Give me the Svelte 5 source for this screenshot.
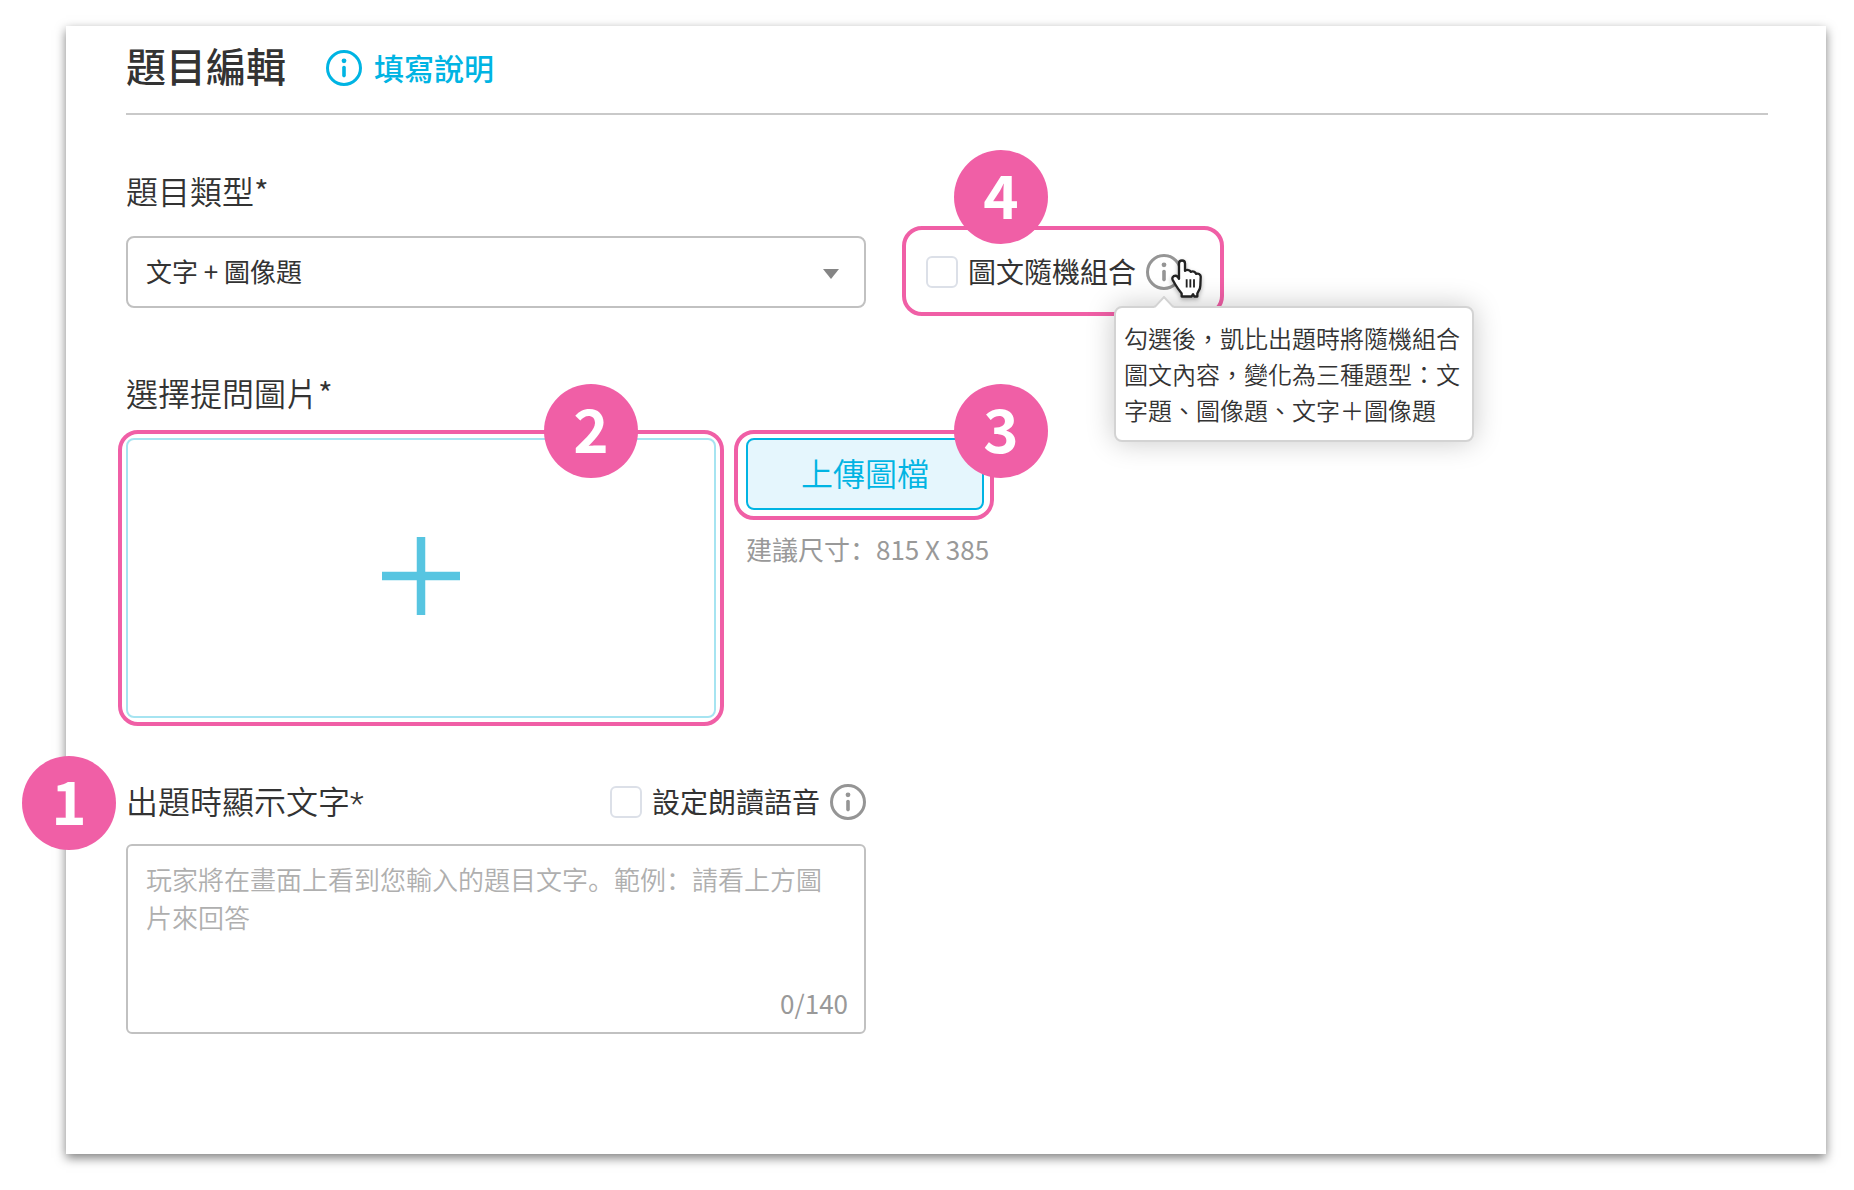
<script>
  let kind = $state('mixed');
  let shuffle = $state(false);
  let speech = $state(false);
  let prompt = $state('');
</script>

{#snippet info()}
  <svg class="info" viewBox="0 0 36 36" aria-hidden="true">
    <circle cx="18" cy="18" r="16.5" fill="none" stroke="currentColor" stroke-width="3" />
    <circle cx="18" cy="10.8" r="2.4" fill="currentColor" />
    <path d="M18 17.6v8" stroke="currentColor" stroke-width="3.6" stroke-linecap="round" />
  </svg>
{/snippet}

<main class="panel">
  <header>
    <h1>題目編輯</h1>
    <a href="#guide">{@render info()}<span>填寫說明</span></a>
  </header>

  <section class="row kind">
    <div class="field">
      <label class="title" for="kind">題目類型*</label>
      <div class="select">
        <select id="kind" bind:value={kind}>
          <option value="mixed">文字 + 圖像題</option>
          <option value="text">文字題</option>
          <option value="image">圖像題</option>
        </select>
        <svg viewBox="0 0 16 10" aria-hidden="true"><path d="M0 0h16l-8 10z" fill="#858585" /></svg>
      </div>
    </div>
    <div class="option marked">
      <label class="check"><input type="checkbox" bind:checked={shuffle} /><span>圖文隨機組合</span></label>
      <button class="hint-button" type="button" aria-label="說明" aria-describedby="tip">{@render info()}</button>
      <span class="badge">4</span>
      <div class="tooltip" id="tip" role="tooltip">
        <svg class="notch" viewBox="0 0 20 12" aria-hidden="true">
          <path d="M0 12L10 1l10 11z" fill="#fff" />
          <path d="M0 10.6h1.2L10 1l8.800 9.600h1.200" fill="none" stroke="#d3d3d3" stroke-width="2" />
        </svg>
        勾選後，凱比出題時將隨機組合圖文內容，變化為三種題型：文字題、圖像題、文字＋圖像題
      </div>
      <svg class="cursor" viewBox="0 0 96 116" aria-hidden="true">
        <path
          d="M24 52V13q0-9 9-9t9 9v22q5-4 10-2 5 1 7 5 6-3 11 0 4 2 5 6 6-2 10 1 5 3 4 10l-1 24q0 9-5 16l-4 8v9H70l-4-7-4 7H32v-9Q20 88 13 76L5 62q-3-7 3-11 7-3 12 2l4 6z"
          fill="#fff" stroke="#222" stroke-width="7" stroke-linejoin="round" />
        <path d="M47 60v25M58 60v25M69 60v25" stroke="#222" stroke-width="5.500" />
      </svg>
    </div>
  </section>

  <section>
    <h2 class="title">選擇提問圖片*</h2>
    <div class="row media">
      <div class="drop marked">
        <button type="button" aria-label="選擇圖片">
          <svg viewBox="0 0 78 78" aria-hidden="true"><path d="M39 0v78M0 39h78" stroke="#57c5e1" stroke-width="8.500" /></svg>
        </button>
        <span class="badge">2</span>
      </div>
      <div class="upload">
        <div class="send marked">
          <button type="button">上傳圖檔</button>
          <span class="badge">3</span>
        </div>
        <p>建議尺寸：815 X 385</p>
      </div>
    </div>
  </section>

  <section class="row text">
    <div class="field">
      <div class="heading">
        <span class="badge">1</span>
        <label class="title" for="prompt">出題時顯示文字<span class="star">*</span></label>
        <div class="option">
          <label class="check"><input type="checkbox" bind:checked={speech} /><span>設定朗讀語音</span></label>
          <button class="hint-button" type="button" aria-label="說明">{@render info()}</button>
        </div>
      </div>
      <div class="area">
        <textarea
          id="prompt"
          maxlength="140"
          bind:value={prompt}
          placeholder="玩家將在畫面上看到您輸入的題目文字。範例：請看上方圖片來回答"></textarea>
        <output for="prompt">{prompt.length}/140</output>
      </div>
    </div>
  </section>
</main>

<style>
  :global(body) {
    background: #fff;
  }
  * {
    box-sizing: border-box;
  }
  .panel {
    margin: 26px 28px 36px 66px;
    padding: 0 58px 120px 60px;
    background: #fff;
    box-shadow: 0 4px 10px rgba(0, 0, 0, 0.5);
    color: #333;
    font-family: 'Noto Sans CJK SC', sans-serif;
    font-weight: 350;
    display: flow-root;
  }
  h1,
  h2,
  p {
    margin: 0;
  }
  button,
  select,
  textarea {
    font: inherit;
    color: inherit;
    margin: 0;
  }
  button {
    padding: 0;
    background: none;
    border: 0;
    cursor: pointer;
  }
  svg {
    display: block;
    flex: none;
  }
  header {
    display: flex;
    align-items: center;
    gap: 40px;
    height: 89px;
    padding-bottom: 4px;
    border-bottom: 2px solid #c9c9c9;
    font-family: 'Noto Sans CJK TC', sans-serif;
  }
  h1 {
    padding-bottom: 6px;
    font-size: 40px;
    line-height: 60px;
    font-weight: 500;
  }
  header a {
    display: flex;
    align-items: center;
    gap: 12px;
    color: #00b4e3;
    font-size: 30px;
    line-height: 44px;
    font-weight: 500;
    text-decoration: none;
  }
  header a span,
  .check span {
    padding-bottom: 2px;
  }
  .info {
    width: 36px;
    height: 36px;
  }
  .title {
    display: block;
    padding-bottom: 4px;
    font-size: 32px;
    line-height: 44px;
    font-weight: 350;
    font-family: 'Noto Sans CJK TC', sans-serif;
  }
  .star {
    font-family: Roboto, sans-serif;
    line-height: 1;
  }
  .row {
    display: grid;
    grid-template-columns: minmax(0, 740fr) minmax(0, 902fr);
  }
  .kind {
    align-items: end;
    margin: 53px 0 62px;
  }
  .select {
    position: relative;
    margin-top: 20px;
    display: grid;
  }
  select {
    height: 72px;
    padding: 0 48px 4px 18px;
    appearance: none;
    background: #fff;
    border: 2px solid #c1c1c1;
    border-radius: 8px;
    font-size: 26px;
    font-weight: 400;
  }
  .select svg {
    position: absolute;
    right: 27px;
    top: 33px;
    width: 16px;
    height: 10px;
    pointer-events: none;
  }
  .option {
    display: flex;
    align-items: center;
    gap: 10px;
  }
  .check {
    display: flex;
    align-items: center;
    gap: 10px;
    font-size: 28px;
    line-height: 34px;
    font-weight: 400;
    font-family: 'Noto Sans CJK TC', sans-serif;
  }
  input {
    appearance: none;
    width: 32px;
    height: 32px;
    margin: 0;
    border: 2px solid #dce0e8;
    border-radius: 6px;
    background: #fff;
  }
  input:checked {
    background: #00b4e3;
  }
  .hint-button {
    color: #959595;
  }
  .marked {
    position: relative;
    justify-self: start;
  }
  .marked::before {
    content: '';
    position: absolute;
    inset: -8px;
    border: 4px solid #f05fa6;
    border-radius: 20px;
    pointer-events: none;
  }
  .kind .marked {
    margin: 0 0 18px 60px;
  }
  .kind .marked::before {
    inset: -28px -42px -26px -24px;
  }
  .badge {
    position: absolute;
    width: 94px;
    height: 94px;
    border-radius: 50%;
    background: #f05fa6;
    color: #fff;
    font-size: 60px;
    line-height: 86px;
    font-weight: 700;
    text-align: center;
  }
  .kind .badge {
    left: 28px;
    top: -104px;
  }
  .tooltip {
    position: absolute;
    left: 188px;
    top: 52px;
    width: 360px;
    padding: 12px 8px;
    border: 2px solid #d3d3d3;
    border-radius: 8px;
    background: #fff;
    box-shadow: 0 0 28px rgba(0, 0, 0, 0.22);
    font-family: 'Noto Sans CJK TC', sans-serif;
    font-size: 24px;
    line-height: 36px;
  }
  .notch {
    position: absolute;
    left: 38px;
    top: -12px;
    width: 20px;
    height: 12px;
  }
  .cursor {
    position: absolute;
    left: 245px;
    top: 5px;
    width: 32px;
    height: 39px;
    filter: drop-shadow(0 2px 2px rgba(0, 0, 0, 0.3));
    pointer-events: none;
  }
  .media {
    grid-template-columns: minmax(0, 590fr) minmax(0, 1052fr);
    margin-top: 20px;
  }
  .drop {
    justify-self: stretch;
    display: grid;
  }
  .drop button {
    display: grid;
    place-items: center;
    height: 280px;
    padding-bottom: 4px;
    border: 2px solid #a6e4f1;
    border-radius: 8px;
  }
  .drop svg {
    width: 78px;
    height: 78px;
  }
  .drop .badge {
    right: 78px;
    top: -54px;
  }
  .upload {
    padding-left: 30px;
    display: flex;
    flex-direction: column;
    align-items: start;
    gap: 20px;
  }
  .send::before {
    inset: -8px -10px -10px -12px;
  }
  .send button {
    width: 238px;
    height: 72px;
    padding-bottom: 4px;
    border: 2px solid #00b4e3;
    border-radius: 8px;
    background: #e5f6fd;
    color: #00b4e3;
    font-size: 32px;
    font-family: 'Noto Sans CJK TC', sans-serif;
  }
  .send .badge {
    right: -64px;
    top: -54px;
  }
  .upload p {
    color: #999;
    font-size: 26px;
    line-height: 38px;
    font-weight: 400;
  }
  .text {
    margin-top: 60px;
  }
  .heading {
    position: relative;
    display: flex;
    align-items: center;
    justify-content: space-between;
    margin-bottom: 18px;
  }
  .heading .badge {
    left: -104px;
    top: -22px;
  }
  .area {
    display: flex;
    flex-direction: column;
    height: 190px;
    padding: 14px 16px 10px 18px;
    border: 2px solid #c1c1c1;
    border-radius: 6px;
  }
  textarea {
    flex: 1;
    padding: 0 20px 0 0;
    border: 0;
    outline: 0;
    resize: none;
    background: none;
    font-size: 26px;
    line-height: 38px;
  }
  textarea::placeholder {
    color: #afafaf;
    opacity: 1;
  }
  output {
    align-self: end;
    color: #999;
    font-size: 26px;
    line-height: 38px;
    font-weight: 400;
  }
</style>
